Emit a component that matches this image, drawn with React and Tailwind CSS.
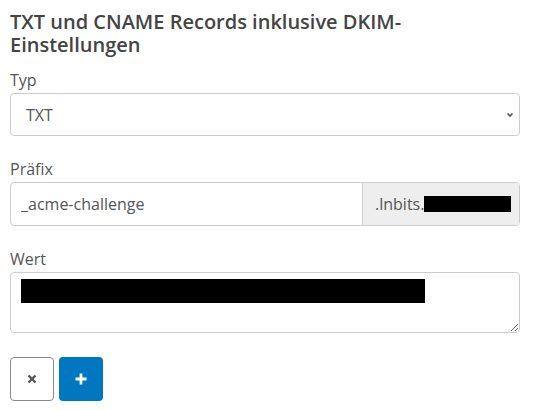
import React from 'react';

const font = { fontFamily: '"Open Sans", "Liberation Sans", sans-serif' };

const Label = ({ children }) => (
  <div className="text-[16px] leading-[24px] text-[#555] mb-[1px]">{children}</div>
);

export default function App() {
  return (
    <div className="bg-white w-[534px] h-[410px] pl-[10px] pr-[14px] pt-[10px]" style={font}>
      <h3 className="text-[20px] leading-[23px] font-semibold text-[#444] mb-[12px]">
        TXT und CNAME Records inklusive DKIM-Einstellungen
      </h3>

      {/* Typ */}
      <Label>Typ</Label>
      <div className="flex items-center h-[43px] border border-[#ccc] rounded-[4px] pl-[15px] pr-[4px] text-[16px] text-[#555] mb-[21px]">
        <span className="flex-1">TXT</span>
        <svg width="10" height="10" viewBox="0 0 10 10">
          <path d="M2.5 3.5 L5 6 L7.5 3.5" fill="none" stroke="#555" strokeWidth="1.7" />
        </svg>
      </div>

      {/* Präfix */}
      <Label>Präfix</Label>
      <div className="flex h-[44px] border border-[#ccc] rounded-[4px] overflow-hidden mb-[21px]">
        <input
          readOnly
          value="_acme-challenge"
          className="flex-1 min-w-0 px-[10px] text-[16px] text-[#555] outline-none"
        />
        <div className="w-[157px] flex items-center bg-[#eee] border-l border-[#ccc] pl-[12px] text-[16px] text-[#555]">
          <span>.lnbits.</span>
          <span className="inline-block w-[87px] h-[16px] bg-black"></span>
        </div>
      </div>

      {/* Wert */}
      <Label>Wert</Label>
      <div className="relative mb-[24px]">
        <textarea
          readOnly
          className="block w-full h-[61px] border border-[#ccc] rounded-[4px] outline-none"
        />
        <div className="absolute left-[11px] top-[7px] w-[404px] h-[24px] bg-black"></div>
      </div>

      {/* Buttons */}
      <div className="flex gap-[5px]">
        <button className="w-[44px] h-[44px] flex items-center justify-center border border-[#888] rounded-[4px] bg-white">
          <svg width="10" height="10" viewBox="0 0 10 10">
            <path d="M1.5 1.5 L8.5 8.5 M8.5 1.5 L1.5 8.5" stroke="#555" strokeWidth="2.4" />
          </svg>
        </button>
        <button className="w-[44px] h-[44px] flex items-center justify-center rounded-[4px] bg-[#0077bf]">
          <svg width="12" height="12" viewBox="0 0 12 12">
            <path d="M6 0.5 V11.5 M0.5 6 H11.5" stroke="#fff" strokeWidth="2.8" />
          </svg>
        </button>
      </div>
    </div>
  );
}
